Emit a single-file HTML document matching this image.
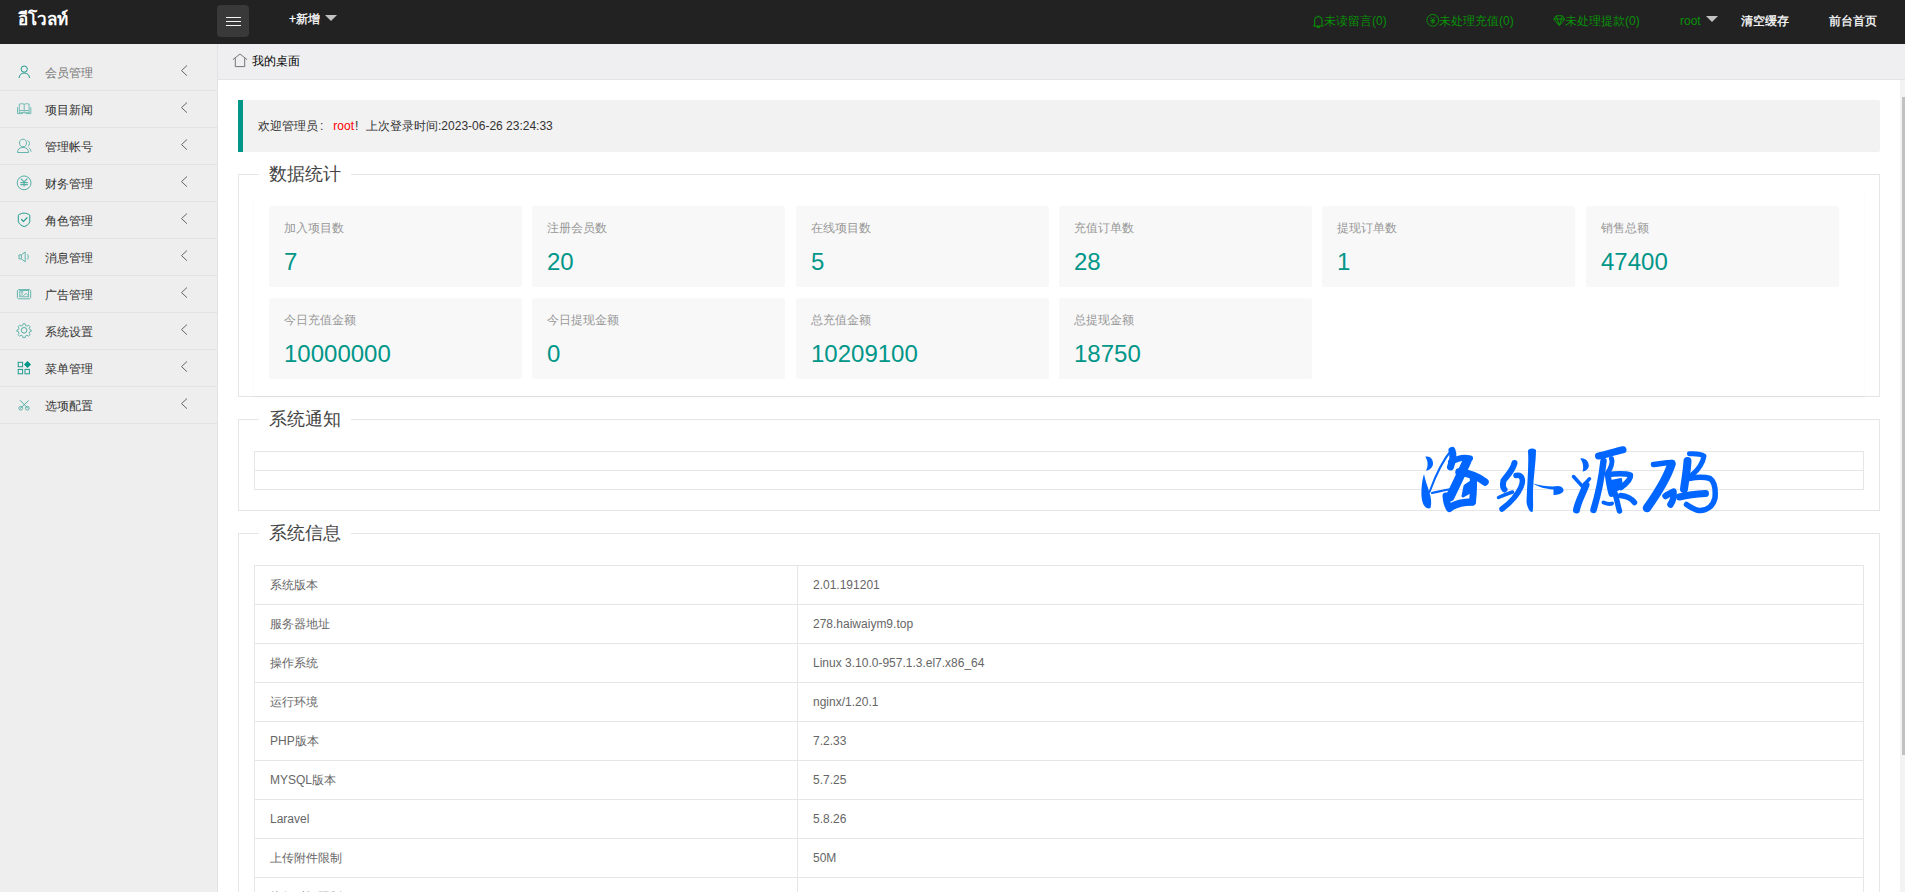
<!DOCTYPE html>
<html><head><meta charset="utf-8">
<style>
*{margin:0;padding:0;box-sizing:border-box}
html,body{width:1905px;height:892px;overflow:hidden;background:#fff;font-family:"Liberation Sans",sans-serif;font-size:12px;color:#333}
.abs{position:absolute}
#hdr{position:absolute;left:0;top:0;width:1905px;height:44px;background:#222}
#logo{position:absolute;left:18px;top:7px;color:#fff;font-size:17px;font-weight:bold;line-height:26px}
#menubtn{position:absolute;left:217px;top:5px;width:32px;height:32px;background:#393939;border-radius:4px}
#menubtn i{position:absolute;left:8.5px;width:15.5px;height:1px;background:#f4f4f4}
.hl{position:absolute;top:12px;line-height:16px;font-size:12px;white-space:nowrap}
.green{color:#089008}
.white{color:#fff;-webkit-text-stroke:0.3px #fff}
.tri{position:absolute;width:0;height:0;border-left:6px solid transparent;border-right:6px solid transparent;border-top:6px solid #c2c2c2}
#side{position:absolute;left:0;top:44px;width:218px;height:848px;background:#eee;border-right:1px solid #e2e2e2;padding-top:10px}
#side .it{position:relative;height:37px;border-bottom:1px solid #e3e3e3}
#side .it span{position:absolute;left:45px;top:11px;font-size:12px;line-height:16px;color:#333}
#side .it svg.ic{position:absolute;left:16px;opacity:.8}
#side .it svg.ar{position:absolute;left:180px;top:11px}
#crumb{position:absolute;left:218px;top:44px;width:1687px;height:36px;background:#efeff1;border-bottom:1px solid #e4e4e6}
#crumb span{position:absolute;left:34px;top:9px;font-size:12px;line-height:16px;color:#000}
#crumb svg{position:absolute;left:14px;top:9px}
#quote{position:absolute;left:238px;top:100px;width:1642px;height:52px;background:#f2f2f2;border-left:5px solid #009688;border-radius:0 2px 2px 0}
#quote div{position:absolute;left:15px;top:15px;line-height:22px;font-size:12px;color:#333}
.x-red{color:#f00}
.cp{display:inline-block;width:12px;padding-left:2px}
fieldset.fs{position:absolute;left:238px;width:1642px;border:1px solid #e6e6e6}
.legend{position:absolute;left:20px;top:-14px;padding:0 10px;background:#fff;font-size:18px;line-height:26px;color:#444;font-weight:300}
.card{position:absolute;left:15px;width:1610px;background:#fff;box-shadow:0 1px 2px 0 rgba(0,0,0,.05)}
.stat{position:absolute;width:253px;height:81px;background:#f8f8f8;border-radius:2px}
.stat h3{position:absolute;left:15px;top:14px;font-size:12px;line-height:16px;font-weight:normal;color:#999}
.stat cite{position:absolute;left:15px;top:41px;font-style:normal;font-size:24px;line-height:30px;color:#009688}
table.t{position:absolute;left:15px;width:1610px;border-collapse:collapse}
table.t td{border:1px solid #e6e6e6;height:39px;padding:0 15px;font-size:12px;color:#666;line-height:20px}
#scroll{position:absolute;left:1900px;top:80px;width:5px;height:812px;background:#f3f3f3}
#thumb{position:absolute;left:1902px;top:97px;width:3px;height:658px;background:#c1c1c1}
</style></head><body>
<div id="hdr">
  <div id="logo">อีโวลท์</div>
  <div id="menubtn"><i style="top:12px"></i><i style="top:16px"></i><i style="top:19.5px"></i></div>
  <div class="hl white" style="left:289px;top:11px;font-size:12px">+新增</div>
  <div class="tri" style="left:325px;top:15px"></div>
  <svg class="abs" style="left:1312px;top:14.5px" width="13" height="13" viewBox="0 0 13 13" fill="none" stroke="#089008" stroke-width="1.1"><path d="M1 11 H11.6 M2.6 11 V5.6 C2.6 3.2 4.2 1.8 6.3 1.8 C8.4 1.8 10 3.2 10 5.6 V11 M6.3 0.6 V1.8 M4.8 11.6 C4.9 12.6 7.7 12.6 7.8 11.6"/></svg><div class="hl green" style="left:1324px;top:13px">未读留言(0)</div>
  <svg class="abs" style="left:1426px;top:13px" width="14" height="14" viewBox="0 0 14 14" fill="none" stroke="#089008" stroke-width="1"><circle cx="6.8" cy="7.3" r="5.9"/><path d="M4.5 4.2 L6.8 6.9 L9.1 4.2 M6.8 6.9 V10.8 M4.5 7.4 H9.1 M4.5 9.1 H9.1" stroke-width="0.95"/></svg><div class="hl green" style="left:1439px;top:13px">未处理充值(0)</div>
  <svg class="abs" style="left:1553px;top:14px" width="13" height="13" viewBox="0 0 13 13" fill="none" stroke="#089008" stroke-width="1"><path d="M3.3 1.8 H9.3 L11.8 5 L6.3 11.7 L0.8 5 Z M0.8 5 H11.8 M4.2 5 L6.3 11.5 L8.4 5 M3.3 1.8 L4.2 5 M9.3 1.8 L8.4 5"/></svg><div class="hl green" style="left:1565px;top:13px">未处理提款(0)</div>
  <div class="hl green" style="left:1680px;top:13px;font-size:12px">root</div>
  <div class="tri" style="left:1706px;top:16px"></div>
  <div class="hl white" style="left:1741px;top:13px;font-size:12px">清空缓存</div>
  <div class="hl white" style="left:1829px;top:13px;font-size:12px">前台首页</div>
</div>
<div id="side">
  <div class="it"><svg class="ic" width="16" height="16" viewBox="0 0 16 16" fill="none" stroke="#1f9a8f" stroke-width="1" style="top:10px;opacity:1"><circle cx="8.2" cy="5.1" r="3.1"/><path d="M3.1 14 C3.3 10.8 5.5 9 8.3 9 C11.1 9 13.3 10.8 13.5 14"/></svg><span style="color:#777">会员管理</span><svg class="ar" width="8" height="12" viewBox="0 0 8 12" fill="none" stroke="#666" stroke-width="1"><path d="M7 0.5 L1.5 5.6 L7 10.7"/></svg></div>
  <div class="it"><svg class="ic" width="16" height="16" viewBox="0 0 16 16" fill="none" stroke="#1f9a8f" stroke-width="1" style="top:10px;opacity:.75"><path d="M3.3 3.2 C5 2.5 6.8 2.5 8.2 3.3 V11.8 C6.8 11.2 5 11.2 3.3 11.8 Z M8.2 3.3 C9.6 2.5 11.4 2.5 13.1 3.2 V11.8 C11.4 11.2 9.6 11.2 8.2 11.8 M3.6 9.5 H7.8 M8.6 9.5 H12.8 M1.5 6.2 V12.6 H7 M14.8 6.2 V12.6 H9.5" stroke-width="0.8"/></svg><span>项目新闻</span><svg class="ar" width="8" height="12" viewBox="0 0 8 12" fill="none" stroke="#666" stroke-width="1"><path d="M7 0.5 L1.5 5.6 L7 10.7"/></svg></div>
  <div class="it"><svg class="ic" width="16" height="16" viewBox="0 0 16 16" fill="none" stroke="#1f9a8f" stroke-width="1" style="top:10px;opacity:.75"><path d="M7 1.2 C9.2 1.2 10.5 2.8 10.5 5 C10.5 7.2 9.2 8.8 7 8.8 C4.8 8.8 3.5 7.2 3.5 5 C3.5 2.8 4.8 1.2 7 1.2 Z M1.5 14.5 C1.5 11.3 3.6 9.4 7 9.4 C10.4 9.4 12.5 11.3 12.5 14.5 Z M11.6 2.6 C13 3 13.6 4.3 13.5 5.6 C13.4 6.9 12.8 7.9 11.8 8.4 M12.9 9.8 C14.2 10.7 14.9 12 15 13.8" stroke-width="0.9"/></svg><span>管理帐号</span><svg class="ar" width="8" height="12" viewBox="0 0 8 12" fill="none" stroke="#666" stroke-width="1"><path d="M7 0.5 L1.5 5.6 L7 10.7"/></svg></div>
  <div class="it"><svg class="ic" width="16" height="16" viewBox="0 0 16 16" fill="none" stroke="#1f9a8f" stroke-width="1" style="top:10px;opacity:.75"><circle cx="8.1" cy="7.85" r="6.9"/><path d="M4.8 3.7 L8.1 6.9 L11.3 3.7 M8.1 6.9 V11.5 M4.4 7.6 H11.8 M4.4 9.6 H11.8" stroke-width="1.1"/></svg><span>财务管理</span><svg class="ar" width="8" height="12" viewBox="0 0 8 12" fill="none" stroke="#666" stroke-width="1"><path d="M7 0.5 L1.5 5.6 L7 10.7"/></svg></div>
  <div class="it"><svg class="ic" width="16" height="16" viewBox="0 0 16 16" fill="none" stroke="#1f9a8f" stroke-width="1" style="top:10px;opacity:1"><path d="M2.3 3.2 C4.5 1.6 6.3 1.1 8.1 1.1 C9.9 1.1 11.7 1.6 13.8 3.2 V9.6 C13 12.2 10.8 13.8 8.2 14.6 C5.5 13.8 3.2 12.2 2.3 9.6 Z"/><path d="M5.2 7.3 L7.5 9.5 L11.4 5.4" stroke-width="1.2"/></svg><span>角色管理</span><svg class="ar" width="8" height="12" viewBox="0 0 8 12" fill="none" stroke="#666" stroke-width="1"><path d="M7 0.5 L1.5 5.6 L7 10.7"/></svg></div>
  <div class="it"><svg class="ic" width="16" height="16" viewBox="0 0 16 16" fill="none" stroke="#1f9a8f" stroke-width="1" style="top:10px;opacity:.75"><path d="M3 5.9 H5.4 L9.2 3 V12.8 L5.4 9.9 H3 Z M5.4 5.9 V9.9 M11.4 5.3 C12.5 6.3 12.6 9.4 11.4 10.5" stroke-width="0.9"/></svg><span>消息管理</span><svg class="ar" width="8" height="12" viewBox="0 0 8 12" fill="none" stroke="#666" stroke-width="1"><path d="M7 0.5 L1.5 5.6 L7 10.7"/></svg></div>
  <div class="it"><svg class="ic" width="16" height="16" viewBox="0 0 16 16" fill="none" stroke="#1f9a8f" stroke-width="1" style="top:10px;opacity:.75"><path d="M2.5 3.6 H13.6 L14.7 4.7 V11.8 L13.6 12.8 H2.5 L1.4 11.8 V4.7 Z" stroke-width="0.9"/><rect x="3.8" y="4.4" width="8.8" height="6.4" stroke-width="0.8"/><path d="M4.2 10.2 L6.2 8.4 L7.6 9.6 L10 7.4 L12.2 9.4" stroke-width="0.8"/><circle cx="6" cy="6.3" r="0.9" stroke-width="0.8"/></svg><span>广告管理</span><svg class="ar" width="8" height="12" viewBox="0 0 8 12" fill="none" stroke="#666" stroke-width="1"><path d="M7 0.5 L1.5 5.6 L7 10.7"/></svg></div>
  <div class="it"><svg class="ic" width="16" height="16" viewBox="0 0 16 16" fill="none" stroke="#1f9a8f" stroke-width="1" style="top:10px;opacity:.75"><circle cx="8.1" cy="7.3" r="2.8"/><path d="M7 0.8 H9.2 L9.6 2.5 L11.1 3.1 L12.6 2.2 L14.1 3.7 L13.2 5.2 L13.8 6.7 L15.2 7 V8.4 L13.8 8.7 L13.2 10.2 L14.1 11.7 L12.6 13.2 L11.1 12.3 L9.6 12.9 L9.2 14.6 H7 L6.6 12.9 L5.1 12.3 L3.6 13.2 L2.1 11.7 L3 10.2 L2.4 8.7 L0.9 8.4 V7 L2.4 6.7 L3 5.2 L2.1 3.7 L3.6 2.2 L5.1 3.1 L6.6 2.5 Z" stroke-width="0.9"/></svg><span>系统设置</span><svg class="ar" width="8" height="12" viewBox="0 0 8 12" fill="none" stroke="#666" stroke-width="1"><path d="M7 0.5 L1.5 5.6 L7 10.7"/></svg></div>
  <div class="it"><svg class="ic" width="16" height="16" viewBox="0 0 16 16" fill="none" stroke="#1f9a8f" stroke-width="1" style="top:10px;opacity:1"><rect x="2.2" y="2.3" width="4.4" height="4.4"/><rect x="2.2" y="9.4" width="4.4" height="4.4"/><rect x="9" y="9.4" width="4.4" height="4.4"/><path d="M11.5 0.9 L15 4.4 L11.5 7.9 L8 4.4 Z" fill="#009688" stroke="none"/></svg><span>菜单管理</span><svg class="ar" width="8" height="12" viewBox="0 0 8 12" fill="none" stroke="#666" stroke-width="1"><path d="M7 0.5 L1.5 5.6 L7 10.7"/></svg></div>
  <div class="it"><svg class="ic" width="16" height="16" viewBox="0 0 16 16" fill="none" stroke="#1f9a8f" stroke-width="1" style="top:10px;opacity:.75"><path d="M4 3.2 L12.2 11.6 M12.6 3.6 L4 11.6" stroke-width="1"/><circle cx="4.7" cy="11.2" r="1.9" stroke-width="0.9"/><circle cx="11.3" cy="11.2" r="1.9" stroke-width="0.9"/></svg><span>选项配置</span><svg class="ar" width="8" height="12" viewBox="0 0 8 12" fill="none" stroke="#666" stroke-width="1"><path d="M7 0.5 L1.5 5.6 L7 10.7"/></svg></div>
</div>
<div id="crumb"><svg width="16" height="15" viewBox="0 0 16 15" fill="none" stroke="#666" stroke-width="0.9"><path d="M0.9 6.6 L8 1 L15.1 6.6 M3.3 5.2 V13.6 H12.7 V5.2"/></svg><span>我的桌面</span></div>
<div id="quote"><div>欢迎管理员<span class="cp">:</span> <span class="x-red">root</span><span class="cp" style="padding-left:1px">!</span>上次登录时间:2023-06-26 23:24:33</div></div>

<fieldset class="fs" style="top:174px;height:223px">
  <div class="legend">数据统计</div>
  <div class="card" style="top:20px;height:201px"></div>
</fieldset>
<div class="stat" style="left:269px;top:206px"><h3>加入项目数</h3><cite>7</cite></div>
<div class="stat" style="left:532px;top:206px"><h3>注册会员数</h3><cite>20</cite></div>
<div class="stat" style="left:796px;top:206px"><h3>在线项目数</h3><cite>5</cite></div>
<div class="stat" style="left:1059px;top:206px"><h3>充值订单数</h3><cite>28</cite></div>
<div class="stat" style="left:1322px;top:206px"><h3>提现订单数</h3><cite>1</cite></div>
<div class="stat" style="left:1586px;top:206px"><h3>销售总额</h3><cite>47400</cite></div>
<div class="stat" style="left:269px;top:298px"><h3>今日充值金额</h3><cite>10000000</cite></div>
<div class="stat" style="left:532px;top:298px"><h3>今日提现金额</h3><cite>0</cite></div>
<div class="stat" style="left:796px;top:298px"><h3>总充值金额</h3><cite>10209100</cite></div>
<div class="stat" style="left:1059px;top:298px"><h3>总提现金额</h3><cite>18750</cite></div>

<fieldset class="fs" style="top:419px;height:92px">
  <div class="legend">系统通知</div>
  <table class="t" style="top:31px"><tr><td style="height:19px"></td></tr><tr><td style="height:19px"></td></tr></table>
</fieldset>

<fieldset class="fs" style="top:533px;height:400px">
  <div class="legend">系统信息</div>
  <table class="t" style="top:31px">
    <tr><td style="width:543px">系统版本</td><td>2.01.191201</td></tr>
    <tr><td>服务器地址</td><td>278.haiwaiym9.top</td></tr>
    <tr><td>操作系统</td><td>Linux 3.10.0-957.1.3.el7.x86_64</td></tr>
    <tr><td>运行环境</td><td>nginx/1.20.1</td></tr>
    <tr><td>PHP版本</td><td>7.2.33</td></tr>
    <tr><td>MYSQL版本</td><td>5.7.25</td></tr>
    <tr><td>Laravel</td><td>5.8.26</td></tr>
    <tr><td>上传附件限制</td><td>50M</td></tr>
    <tr><td>执行时间限制</td><td>60s</td></tr>
  </table>
</fieldset>

<svg class="abs" style="left:1415px;top:440px" width="310" height="80" viewBox="0 0 310 80" fill="none" stroke="#0066ff" stroke-linecap="round" stroke-linejoin="round">
<g>
<path d="M10.3 16.6 C15 15.5 18.5 19.5 18 24 C17.5 28 14 30.5 11 30.5 C13.5 26 13 21 10.3 16.6Z" fill="#0066ff" stroke="none"/>
<path d="M9 34 C6.5 42 5.5 55 7.5 62 C9 67 12.5 69.5 15.5 68 C17 63 16 57 14 51 C12 45 10 39 9 34Z" fill="#0066ff" stroke="none"/>
<path d="M14.5 52 C20 37 28 20 36.5 10" stroke-width="2"/>
<path d="M37 10.5 C38.5 14 38 20 35.5 27" stroke-width="7"/>
<path d="M36 22 C42 18.5 48 16.5 55 18.5" stroke-width="6"/>
<path d="M52 21 C47 32 41 45 35 57" stroke-width="9"/><path d="M50 46 L56 42 L55 52 L48 56Z" fill="#0066ff" stroke-width="3"/>
<path d="M17 53 C24 51.5 30 50 36 49" stroke-width="2.2"/>
<path d="M31 56 C31.5 62 32.5 66 34.5 68.5" stroke-width="7"/>
<path d="M35 67.5 C42 63 50 62 57 62" stroke-width="7.5"/>
<path d="M58 36 C59 43 58.5 52 57.5 62" stroke-width="7"/>
<path d="M44 32 C53 33 62 36 70 42" stroke-width="7.5"/>
</g>
<g transform="translate(75 0)">
<path d="M38 11 C38 8 44 7.5 46 10 C46 22 43 40 43 55 C43 63 43.5 68 42.5 72 C40 73 37 67 36.5 62 C37 45 39 25 38 11Z" fill="#0066ff" stroke="none"/>
<path d="M43 43.5 C52 46 62 47 68 46 C72 46 74 49 73.5 51 C72 54 67 55 63.5 55 L63.5 49.5 C56 49 48 47 43 43.5Z" fill="#0066ff" stroke="none"/>
<path d="M24.5 23 C23 30 17 36 13.5 40.5 C12.5 45 13 48 14.5 49.5" stroke-width="6"/>
<path d="M26 35.5 C32 34 34 40 31 47 C27 56 20 63 12 69" stroke-width="5.5"/>
<path d="M8.5 57.5 C13 55.5 18 53.5 22.5 52" stroke-width="3.5"/>
</g>
<g transform="translate(155 0)">
<path d="M10.3 18.4 C15 17.5 19 21.5 18.8 26 C18.5 29 15.5 31.5 12.6 31.4 C14 27 13 22 10.3 18.4Z" fill="#0066ff" stroke="none"/>
<path d="M3.5 36.5 L12.5 46.5 L19.5 38.8" stroke-width="3.5"/>
<path d="M16 45 C12 55 7.5 63 6.5 70" stroke-width="7"/>
<path d="M28.5 16 C36 15 44 11.5 53 9.8" stroke-width="7"/>
<path d="M33.5 21 C32 35 28 55 23.5 70" stroke-width="6.5"/>
<path d="M41.5 18.5 C43 22 41 28 38 32" stroke-width="5"/>
<path d="M37 34.5 C46 33.5 55 33 60.5 35 C61 39 57 43 51 47.5" stroke-width="5.5"/>
<path d="M38 36 C39 43 40 49 41.5 54" stroke-width="6"/>
<path d="M41 41 L51 39 L52 47 L43 53 Z" fill="#0066ff" stroke-width="2"/>
<path d="M45 53 C47 60 48 66 49.5 71" stroke-width="5.5"/>
<path d="M33.5 62.5 C37 64 40 64.5 42 63.5" stroke-width="4"/>
<path d="M50.5 55.5 C56 56 61 58 64.5 62.5" stroke-width="5.5"/>
</g>
<g transform="translate(230 0)">
<path d="M8.5 24.5 C14 24 20 22.5 27.5 22.5" stroke-width="5.5"/>
<path d="M26.5 24 C22 38 12 54 2 68" stroke-width="8.5"/>
<path d="M20.5 56 C24 54 27 52 28.5 51.5 C29 56 28 61 25.5 64.5" stroke-width="6.5"/>
<path d="M44.5 13.8 C50 13.5 56 14 59 16 C58 22 54 29 47 35" stroke-width="5"/>
<path d="M42.5 21 C42 31 40 41 39 49" stroke-width="8"/>
<path d="M44 38.5 C52 37 60 37 65 38.5 C70 42 70.5 52 70 58 C68 66 62 71 54 70.5 C50 70 45 67 41.5 64.5" stroke-width="5.5"/>
<path d="M34.5 57 C43 55 52 54 60.5 53.5" stroke-width="7"/>
</g>
</svg>
<div id="scroll"></div><div id="thumb"></div>
</body></html>
